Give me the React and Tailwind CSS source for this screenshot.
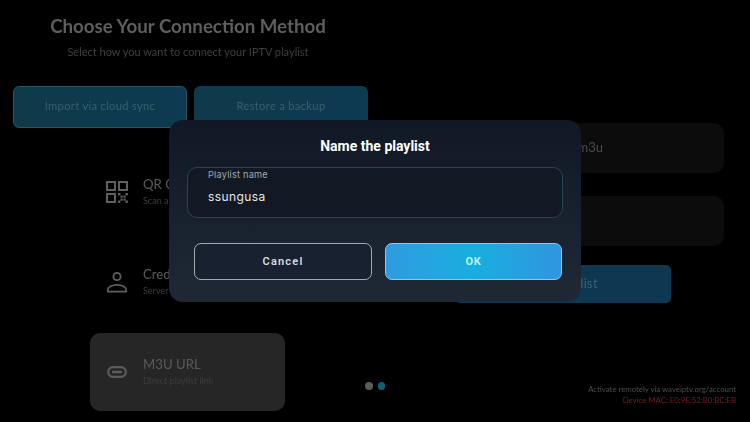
import React from "react";

function QrIcon() {
  return (
    <svg width="22" height="22" viewBox="0 0 22 22" fill="none" stroke="#5f5f5f" strokeWidth="2">
      <rect x="1" y="1" width="8" height="8" />
      <rect x="13" y="1" width="8" height="8" />
      <rect x="1" y="13" width="8" height="8" />
      <g fill="#5f5f5f" stroke="none">
        <rect x="12" y="12" width="2.4" height="2.4" />
        <rect x="19.5" y="12" width="2.4" height="2.4" />
        <rect x="14.5" y="14.5" width="2.2" height="2.2" />
        <rect x="17.5" y="14.5" width="2.2" height="2.2" />
        <rect x="14.5" y="17.5" width="2.2" height="2.2" />
        <rect x="17.5" y="17.5" width="2.2" height="2.2" />
        <rect x="12" y="19.5" width="2.4" height="2.4" />
        <rect x="19.5" y="19.5" width="2.4" height="2.4" />
      </g>
    </svg>
  );
}

function UserIcon() {
  return (
    <svg width="22" height="22" viewBox="0 0 22 22" fill="none" stroke="#5f5f5f" strokeWidth="1.8">
      <circle cx="11" cy="5.5" r="3.6" />
      <path d="M1.8 20.6v-1.8c0-2.6 4.4-5 9.2-5s9.2 2.4 9.2 5v1.8z" strokeLinejoin="round" />
    </svg>
  );
}

function LinkIcon() {
  return (
    <svg width="20" height="12" viewBox="0 0 20 12" fill="none" stroke="#5c5c5c">
      <rect x="1.2" y="1.2" width="17.6" height="9.6" rx="4.8" strokeWidth="2.2" />
      <path d="M6 6h8" strokeWidth="2.4" strokeLinecap="round" />
    </svg>
  );
}

function Row({ icon, title, sub, className }) {
  return (
    <div className={"flex items-center ml-[77px] w-[195px] h-[78px] rounded-[10px] pl-[16px] gap-[15px] " + className}>
      <div className="w-[22px] flex justify-center -mt-[1px]">{icon}</div>
      <div className="flex flex-col -mt-[1px]">
        <span className="text-[13.2px] leading-[17px] text-[#5a5a5a]">{title}</span>
        <span className="text-[9px] leading-[13px] text-[#3c3c3c] mt-[1px]">{sub}</span>
      </div>
    </div>
  );
}

export default function App() {
  return (
    <div className="relative w-[750px] h-[422px] overflow-hidden bg-black flex font-['Lato','Liberation_Sans',sans-serif]">
      {/* Left column */}
      <div className="w-[368px] shrink-0 pl-[13px] flex flex-col blur-[0.4px]">
        <div className="pr-[5px] flex flex-col items-center pt-[14px]">
          <h1 className="text-[18.7px] leading-[24px] font-bold text-[#5e5e5e] whitespace-nowrap">Choose Your Connection Method</h1>
          <p className="text-[11px] leading-[14px] mt-[7px] text-[#3f3f3f] whitespace-nowrap">Select how you want to connect your IPTV playlist</p>
        </div>
        <div className="flex gap-[7px] mt-[27px]">
          <div className="w-[174px] h-[42px] rounded-[6px] border border-[#2a5563] bg-gradient-to-r from-[#0f3a4a] to-[#0e3a52] flex items-center justify-center pb-[1px] text-[11.2px] text-[#3a5f6b] tracking-[0.3px]">Import via cloud sync</div>
          <div className="w-[174px] h-[42px] rounded-[6px] bg-gradient-to-r from-[#0f3a4a] to-[#0e3a52] flex items-center justify-center pb-[1px] text-[11.2px] text-[#3a5f6b] tracking-[0.3px]">Restore a backup</div>
        </div>
        <div className="mt-[25px] flex flex-col gap-[12px]">
          <Row icon={<QrIcon />} title="QR Code" sub="Scan a code" className="" />
          <Row icon={<UserIcon />} title="Credentials" sub="Server login" className="" />
          <Row icon={<LinkIcon />} title="M3U URL" sub="Direct playlist link" className="bg-[#262626]" />
        </div>
      </div>

      {/* Right column */}
      <div className="flex-1 flex flex-col pt-[123px] blur-[0.4px]">
        <div className="ml-[34px] w-[322px] h-[50px] rounded-[10px] bg-[#0c0c0c] flex items-center justify-end pr-[121px] text-[13px] text-[#4a4a4a]">Playlist .m3u</div>
        <div className="ml-[34px] w-[322px] h-[50px] rounded-[10px] bg-[#0c0c0c] mt-[23px]"></div>
        <div className="ml-[87px] w-[216px] h-[38px] rounded-[5px] bg-[#0e3852] mt-[19px] flex items-center justify-center text-[13px] text-[#3d6073] tracking-[0.3px]">Add playlist</div>
        <div className="flex justify-between mt-[73px] h-[26px]">
          <div className="flex gap-[5px] pt-[6px]">
            <span className="w-[7.5px] h-[7.5px] rounded-full bg-[#5a5a5a] -ml-[3px]"></span>
            <span className="w-[7.5px] h-[7.5px] rounded-full bg-[#0f6077]"></span>
          </div>
          <div className="flex flex-col items-end pr-[14px] pt-[8px] text-[7.8px] leading-[11px] whitespace-nowrap">
            <span className="text-[#4d4d4d]">Activate remotely via waveiptv.org/account</span>
            <span className="text-[#6b2020]">Device MAC: E0:9E:52:B0:BC:EB</span>
          </div>
        </div>
      </div>

      {/* Dialog */}
      <div className="absolute left-[169px] top-[120px] w-[412px] h-[182px] rounded-[14px] bg-gradient-to-b from-[#111825] to-[#1f2935] flex flex-col px-[18px] font-['Roboto','Liberation_Sans',sans-serif]">
        <h2 className="text-center text-[14px] leading-[18px] font-bold text-white mt-[17px]">Name the playlist</h2>
        <div className="mt-[12px] w-[376px] h-[51px] rounded-[10px] border border-[#1d4a55] bg-[#121925] pl-[20px] flex flex-col">
          <span className="text-[9.2px] leading-[12px] mt-[1px] text-[#a3a8ae] tracking-[0.2px] font-['Inter','Roboto',sans-serif]">Playlist name</span>
          <span className="text-[12px] leading-[16px] mt-[8px] text-[#e4e7ea] tracking-[0.4px] font-['Inter','Roboto',sans-serif]">ssungusa</span>
        </div>
        <div className="flex mt-[25px] pl-[7px] gap-[13px]">
          <div className="w-[178px] h-[37px] rounded-[7px] border border-[#a3a9b0] bg-[#182130] flex items-center justify-center pt-[2px] text-[11px] font-semibold text-[#d8dbde] tracking-[1.2px]">Cancel</div>
          <div className="w-[177px] h-[37px] rounded-[7px] border border-[#8fc8ea] bg-gradient-to-r from-[#2f9be0] via-[#17aede] to-[#2f95e0] flex items-center justify-center pt-[1px] text-[11px] font-bold text-[#c4f1f7] tracking-[0.6px]">OK</div>
        </div>
      </div>
    </div>
  );
}
